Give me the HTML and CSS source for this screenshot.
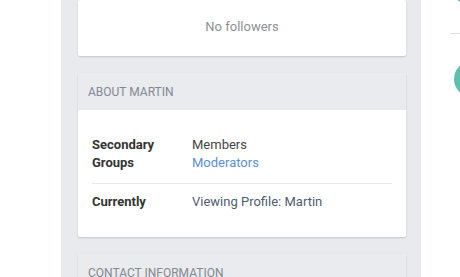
FILE: index.html
```html
<!DOCTYPE html>
<html>
<head>
<meta charset="utf-8">
<link rel="stylesheet" href="styles.css">
</head>
<body>
<div class="page">
  <div class="gutter"></div>
  <main class="column">
    <section class="card followers">
      <p class="empty">No followers</p>
    </section>
    <section class="card">
      <header class="card-head">About Martin</header>
      <div class="card-body">
        <dl class="info-row">
          <dt>Secondary Groups</dt>
          <dd><span class="plain">Members</span><a class="link" href="#">Moderators</a></dd>
        </dl>
        <dl class="info-row last">
          <dt>Currently</dt>
          <dd><span class="navy">Viewing Profile: Martin</span></dd>
        </dl>
      </div>
    </section>
    <section class="card">
      <header class="card-head">Contact Information</header>
      <div class="card-body tall"></div>
    </section>
  </main>
  <aside class="side">
    <div class="avatar top"></div>
    <div class="rule"></div>
    <div class="avatar"></div>
  </aside>
</div>
</body>
</html>
```

FILE: styles.css
```css
* { box-sizing: border-box; }
html, body { margin: 0; padding: 0; background: #fff; overflow: hidden; }
body { font-family: Roboto, "Liberation Sans", sans-serif; font-size: 13px; color: #333; }
.page { display: flex; height: 277px; overflow: hidden; }
.gutter { width: 61px; flex: none; }
.column {
  width: 360px; flex: none; background: #e9eaed;
  padding: 0 15px 0 17px;
  display: flex; flex-direction: column; gap: 17px;
}
.card {
  background: #fff; border-radius: 2px;
  box-shadow: 0 1px 2px rgba(0,0,0,0.16);
  flex: none;
}
.followers { padding: 18px 0 20px; height: 56px; }
.empty { margin: 0; text-align: center; color: #8d9196; line-height: 17px; }
.card-head {
  background: #eaebee; height: 37px; line-height: 38px;
  padding: 0 10px; text-transform: uppercase; color: #828990; font-size: 12px;
  border-radius: 2px 2px 0 0;
}
.card-body { padding: 26px 14px 26px; }
.card-body.tall { height: 60px; }
.info-row { display: flex; margin: 0; line-height: 18px; padding-bottom: 11px; border-bottom: 1px solid #e8e8e8; margin-bottom: 9px; }
.info-row.last { border-bottom: 0; padding-bottom: 0; margin-bottom: 0; }
.info-row dt { width: 100px; flex: none; font-weight: bold; color: #333; padding-right: 10px; }
.info-row dd { margin: 0; display: flex; flex-direction: column; }
.plain { color: #444; }
.link { color: #5c8fd6; text-decoration: none; }
.navy { color: #4f5b73; }
.side { flex: 1; position: relative; }
.avatar {
  position: absolute; width: 36px; height: 36px; border-radius: 50%;
  background: #5fbfae; left: 33px; top: 61px;
}
.avatar.top { top: -31px; left: 31px; }
.rule { position: absolute; left: 29px; right: 0; top: 33px; border-top: 1px solid #e2e2e2; }
```
